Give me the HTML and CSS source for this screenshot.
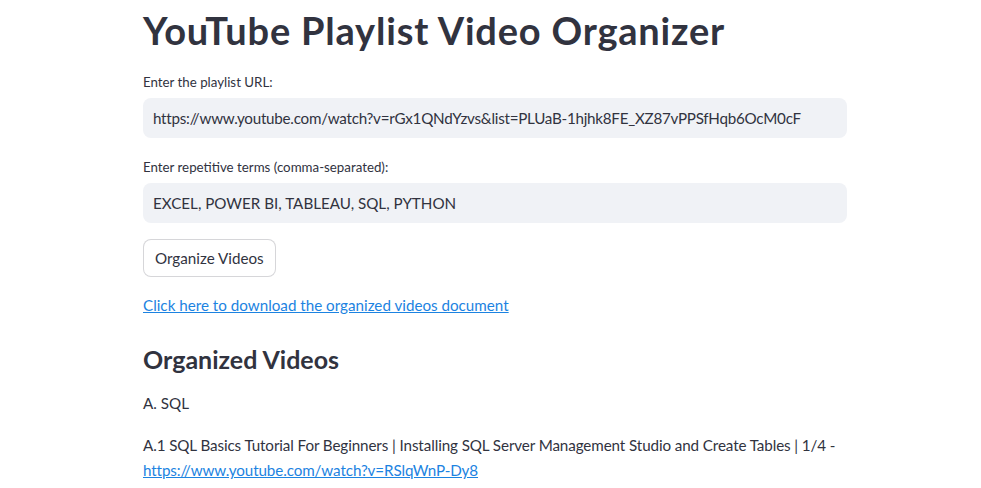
FILE: index.html
```html
<!DOCTYPE html>
<html lang="en">
<head>
<meta charset="utf-8">
<title>YouTube Playlist Video Organizer</title>
<link rel="stylesheet" href="styles.css">
</head>
<body>
<main class="main">
  <h1 class="title">YouTube Playlist Video Organizer</h1>
  <div class="field">
    <label class="label">Enter the playlist URL:</label>
    <div class="input url">https://www.youtube.com/watch?v=rGx1QNdYzvs&amp;list=PLUaB-1hjhk8FE_XZ87vPPSfHqb6OcM0cF</div>
  </div>
  <div class="field field2">
    <label class="label">Enter repetitive terms (comma-separated):</label>
    <div class="input">EXCEL, POWER BI, TABLEAU, SQL, PYTHON</div>
  </div>
  <button class="btn">Organize Videos</button>
  <p class="dl"><a href="#">Click here to download the organized videos document</a></p>
  <h2 class="subtitle">Organized Videos</h2>
  <p class="para">A. SQL</p>
  <p class="para item">A.1 SQL Basics Tutorial For Beginners | Installing SQL Server Management Studio and Create Tables | 1/4 - <a href="#">https://www.youtube.com/watch?v=RSlqWnP-Dy8</a></p>
</main>
</body>
</html>
```
FILE: styles.css
```css
html, body {
  margin: 0;
  padding: 0;
  background: #ffffff;
  overflow: hidden;
}
body {
  font-family: "Lato", "Open Sans", sans-serif;
  color: #31333f;
}
.main {
  width: 704px;
  margin-left: 143px;
  display: flex;
  flex-direction: column;
  align-items: flex-start;
}
.title {
  margin: 0;
  font-size: 38px;
  font-weight: 700;
  letter-spacing: 0.8px;
  line-height: 60px;
  height: 60px;
}
.field {
  width: 100%;
  margin-top: 12px;
}
.field2 {
  margin-top: 19px;
}
.label {
  display: block;
  font-size: 13.3px;
  line-height: 20px;
  height: 20px;
  margin-bottom: 6px;
}
.input {
  box-sizing: border-box;
  height: 40px;
  background: #f0f2f6;
  border-radius: 8px;
  padding: 0 10px;
  font-size: 15.2px;
  line-height: 40px;
  white-space: nowrap;
  overflow: hidden;
}
.url {
  letter-spacing: -0.25px;
}
.btn {
  margin-top: 16px;
  box-sizing: border-box;
  height: 38px;
  padding: 0 11px;
  background: #ffffff;
  border: 1px solid rgba(49, 51, 63, 0.2);
  border-radius: 8px;
  font-family: inherit;
  font-size: 15.2px;
  color: #31333f;
}
.dl {
  margin: 16px 0 0;
  font-size: 15.2px;
  line-height: 24px;
}
a {
  color: #1c83e1;
  text-decoration: underline;
}
.subtitle {
  margin: 24px 0 0;
  font-size: 25px;
  font-weight: 700;
  line-height: 36px;
}
.para {
  margin: 14px 0 0;
  font-size: 15.2px;
  line-height: 25px;
}
.item {
  margin-top: 17px;
  letter-spacing: -0.1px;
}
```
